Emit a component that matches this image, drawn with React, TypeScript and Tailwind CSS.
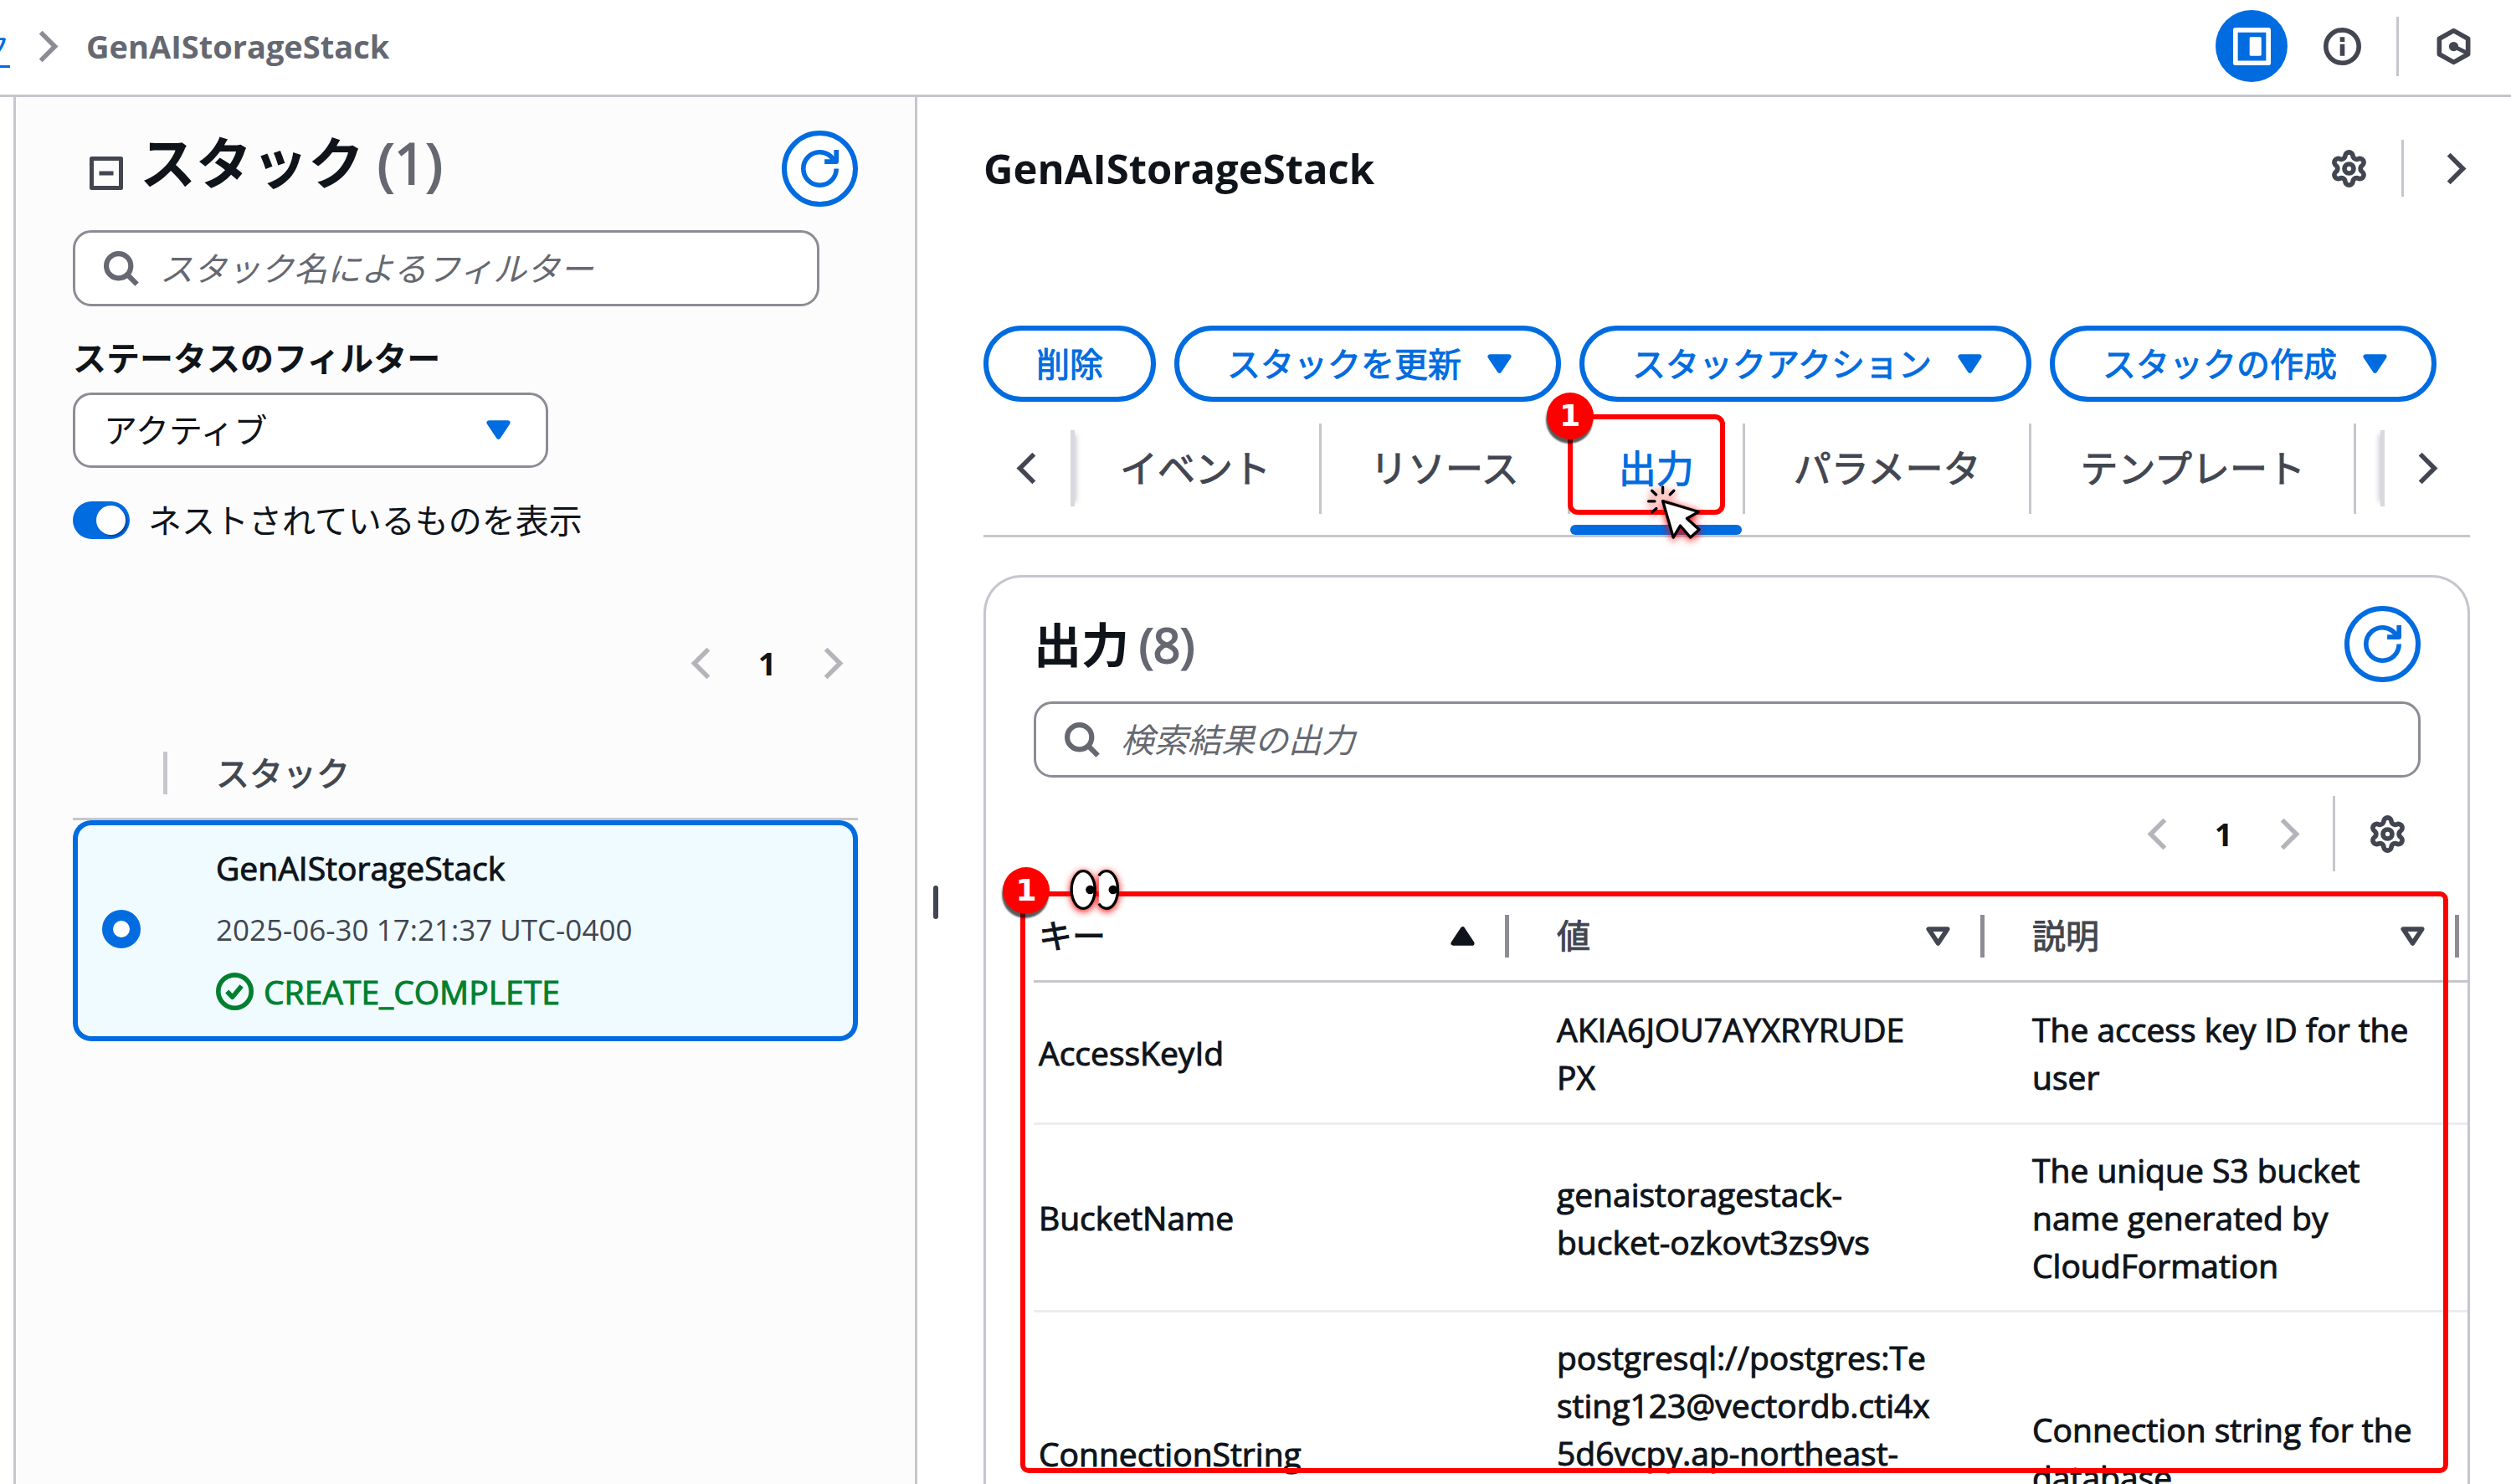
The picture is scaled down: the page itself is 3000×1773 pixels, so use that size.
import React from "react";

type IconProps = { className?: string };

const box = "h-[45px] w-[45px] shrink-0";

function Chevron({ dir, className = "" }: IconProps & { dir: "left" | "right" }) {
  return (
    <svg viewBox="0 0 16 16" className={`${box} ${className}`} fill="none" stroke="currentColor" strokeWidth="2" aria-hidden="true">
      <path d={dir === "right" ? "m4.5 2 6 6-6 6" : "m11.5 2-6 6 6 6"} />
    </svg>
  );
}

function Caret({ kind, className = "" }: IconProps & { kind: "down" | "down-open" | "up" }) {
  return (
    <svg viewBox="0 0 16 16" className={`${box} ${className}`} fill={kind === "down-open" ? "none" : "currentColor"} stroke="currentColor" strokeWidth="2" strokeLinejoin="round" aria-hidden="true">
      <path d={kind === "up" ? "M4 11h8L8 5l-4 6Z" : "M4 5h8l-4 6-4-6Z"} />
    </svg>
  );
}

function Refresh() {
  return (
    <svg viewBox="0 0 16 16" className={box} fill="none" stroke="currentColor" strokeWidth="2" aria-hidden="true">
      <path d="M10 5h5V0" strokeLinejoin="round" />
      <path d="M15 8a6.957 6.957 0 0 1-7 7 6.957 6.957 0 0 1-7-7 6.957 6.957 0 0 1 7-7 6.87 6.87 0 0 1 6.3 4" />
    </svg>
  );
}

function Search() {
  return (
    <svg viewBox="0 0 16 16" className={`${box} text-[#656871]`} fill="none" stroke="currentColor" strokeWidth="2.2" aria-hidden="true">
      <circle cx="7" cy="7" r="5.2" />
      <path d="m10.6 10.6 4.2 4.2" />
    </svg>
  );
}

function Gear() {
  return (
    <svg viewBox="0 0 24 24" className="h-[47px] w-[47px] shrink-0" fill="none" stroke="currentColor" strokeWidth="2.9" strokeLinejoin="round" aria-hidden="true">
      <path d="M9.671 4.136a2.34 2.34 0 0 1 4.659 0 2.34 2.34 0 0 0 3.319 1.915 2.34 2.34 0 0 1 2.33 4.033 2.34 2.34 0 0 0 0 3.831 2.34 2.34 0 0 1-2.33 4.033 2.34 2.34 0 0 0-3.319 1.915 2.34 2.34 0 0 1-4.659 0 2.34 2.34 0 0 0-3.32-1.915 2.34 2.34 0 0 1-2.33-4.033 2.34 2.34 0 0 0 0-3.831A2.34 2.34 0 0 1 6.35 6.051a2.34 2.34 0 0 0 3.319-1.915" />
      <circle cx="12" cy="12" r="2.8" />
    </svg>
  );
}

function PanelIcon() {
  return (
    <svg viewBox="0 0 16 16" className={box} fill="none" aria-hidden="true">
      <rect x="1" y="1" width="14" height="14" stroke="white" strokeWidth="2" strokeLinejoin="round" />
      <rect x="7" y="4" width="5" height="8" rx="0.5" fill="white" />
    </svg>
  );
}

function InfoIcon() {
  return (
    <svg viewBox="0 0 16 16" className={box} fill="none" stroke="currentColor" strokeWidth="2" aria-hidden="true">
      <circle cx="8" cy="8" r="7" />
      <path d="M8 4v2M8 7v5" />
    </svg>
  );
}

function HexIcon() {
  return (
    <svg viewBox="0 0 16 16" className={box} fill="none" stroke="currentColor" strokeWidth="2" strokeLinejoin="round" aria-hidden="true">
      <path d="m8 1.3 6.1 3.4v6.6L8 14.7l-6.1-3.4V4.7L8 1.3Z" />
      <circle cx="8" cy="8" r="2" fill="currentColor" stroke="none" />
      <path d="m8 8 6 2.9" strokeWidth="1.7" />
    </svg>
  );
}

function CollapseIcon() {
  return (
    <svg viewBox="0 0 40 40" className="h-[40px] w-[40px]" fill="none" stroke="#424650" aria-hidden="true">
      <rect x="2.5" y="2.5" width="35" height="35" strokeWidth="5" strokeLinejoin="round" />
      <path d="M11.5 20h17" strokeWidth="5" />
    </svg>
  );
}

function SuccessIcon() {
  return (
    <svg viewBox="0 0 16 16" className={box} fill="none" stroke="currentColor" strokeWidth="2" aria-hidden="true">
      <circle cx="8" cy="8" r="7" />
      <path d="m4.7 8 2.3 2.4 3.9-4.7" strokeLinejoin="round" />
    </svg>
  );
}

function ClickCursor() {
  return (
    <svg viewBox="380 355 220 220" className="h-[73px] w-[73px] overflow-visible drop-shadow-[0_2px_5px_rgba(255,0,0,1)]" stroke="black" strokeLinecap="round" aria-hidden="true">
      <path d="M442 367v21M403 380l15 14M482 380l-14 14M391 418h22M404 457l15-13" strokeWidth="10" fill="none" />
      <path d="m442 417 129 39-42 24 44 40-31 28-37-42-25 42Z" strokeWidth="10" fill="white" strokeLinejoin="round" />
    </svg>
  );
}

function Eyes() {
  return (
    <svg viewBox="266 51 185 156" className="h-[52px] w-[62px] overflow-visible drop-shadow-[0_2px_4px_rgba(255,0,0,1)]" aria-hidden="true">
      <path d="M370 80C380 64 398 57 412 67c20 13 27 38 27 62s-7 49-27 62c-14 10-32 3-42-13Z" fill="white" />
      <path d="M370 79c8-12 18-17 27-17 24 0 41 30 41 67s-17 67-41 67c-9 0-19-5-27-17" fill="none" stroke="black" strokeWidth="10" />
      <ellipse cx="314" cy="129" rx="42" ry="67" fill="white" stroke="black" strokeWidth="10" />
      <circle cx="339" cy="129" r="16" />
      <circle cx="421" cy="129" r="16" />
    </svg>
  );
}

function Badge({ className = "" }: IconProps) {
  return (
    <span className={`flex h-[56px] w-[56px] items-center justify-center rounded-full bg-[#ff0000] font-['DejaVu_Sans'] text-[36px] leading-none font-bold text-white shadow-[-1px_5px_2px_rgba(0,0,0,0.65)] ${className}`}>
      1
    </span>
  );
}

function RefreshButton() {
  return (
    <button type="button" aria-label="更新" className="flex h-[91px] w-[91px] shrink-0 items-center justify-center rounded-full border-[6px] border-[#006ce0] bg-white text-[#006ce0]">
      <Refresh />
    </button>
  );
}

function SearchBox({ id, placeholder, className = "" }: IconProps & { id: string; placeholder: string }) {
  return (
    <label htmlFor={id} className={`flex h-[91px] items-center gap-[24px] rounded-[22px] border-[3px] border-[#8c8c94] bg-white pl-[32px] ${className}`}>
      <Search />
      <input id={id} type="search" aria-label={placeholder} placeholder={placeholder} className="min-w-0 flex-1 bg-transparent text-[40px] outline-none placeholder:text-[#656871] placeholder:italic" />
    </label>
  );
}

function Pager() {
  return (
    <nav aria-label="ページ" className="flex h-[90px] items-center">
      <button type="button" aria-label="前へ" disabled className="flex w-[57px] justify-center text-[#b4b4bb]">
        <Chevron dir="left" />
      </button>
      <button type="button" className="w-[103px] text-center text-[38px] font-bold text-[#0f141a]">1</button>
      <button type="button" aria-label="次へ" disabled className="flex w-[57px] justify-center text-[#b4b4bb]">
        <Chevron dir="right" />
      </button>
    </nav>
  );
}

function Header() {
  return (
    <header className="flex h-[116px] items-center border-b-[3px] border-[#c6c6cd] pb-[3px]">
      <nav aria-label="階層" className="flex items-center text-[38px]">
        <div className="flex w-[12px] justify-end overflow-hidden">
          <a href="#stacks" className="whitespace-nowrap text-[#006ce0] underline decoration-[3px] underline-offset-[8px]">スタック</a>
        </div>
        <Chevron dir="right" className="mr-[22px] ml-[24px] text-[#8c8c94]" />
        <span className="font-bold text-[#656871]">GenAIStorageStack</span>
      </nav>
      <div className="ml-auto flex items-center gap-[22px] pr-[26px] text-[#424650]">
        <button type="button" aria-label="分割パネル" className="flex h-[86px] w-[86px] items-center justify-center rounded-full bg-[#006ce0]">
          <PanelIcon />
        </button>
        <button type="button" aria-label="情報" className="flex h-[86px] w-[86px] items-center justify-center">
          <InfoIcon />
        </button>
        <div className="h-[71px] w-[3px] bg-[#c6c6cd]" />
        <button type="button" aria-label="Amazon Q" className="flex h-[86px] w-[86px] items-center justify-center">
          <HexIcon />
        </button>
      </div>
    </header>
  );
}

function Sidebar() {
  return (
    <aside className="w-[1080px] shrink-0 border-x-[3px] border-[#c6c6cd] bg-[#fcfcfd] px-[68px] pt-[40px]">
      <div className="flex h-[90px] items-center">
        <button type="button" aria-label="折りたたむ" className="mt-[12px] mr-[20px] ml-[20px]">
          <CollapseIcon />
        </button>
        <h2 className="mb-[14px] text-[67px] leading-[80px] font-bold">
          スタック<span className="ml-[16px] font-normal text-[#656871] [-webkit-text-stroke:2px]">(1)</span>
        </h2>
        <div className="ml-auto">
          <RefreshButton />
        </div>
      </div>
      <SearchBox id="stack-filter" placeholder="スタック名によるフィルター" className="mt-[29px] mr-[46px]" />
      <label htmlFor="status" className="mt-[33px] block leading-[57px] font-bold">ステータスのフィルター</label>
      <div className="relative mt-[13px] w-[568px]">
        <select id="status" className="h-[90px] w-full appearance-none rounded-[22px] border-[3px] border-[#8c8c94] bg-white pl-[34px] text-[40px]">
          <option>アクティブ</option>
        </select>
        <Caret kind="down" className="pointer-events-none absolute top-[22px] right-[37px] text-[#006ce0]" />
      </div>
      <label className="mt-[34px] flex items-center gap-[22px] leading-[57px]">
        <input
          type="checkbox"
          defaultChecked
          className="flex h-[45px] w-[68px] appearance-none items-center justify-end rounded-full bg-[#006ce0] pr-[5px] before:h-[35px] before:w-[35px] before:rounded-full before:bg-white before:shadow-[2px_2px_2px_rgba(0,0,60,0.35)] before:content-['']"
        />
        ネストされているものを表示
      </label>
      <div className="mt-[97px] flex justify-end">
        <Pager />
      </div>
      <table className="mt-[33px] w-full border-separate border-spacing-0 text-left">
        <thead>
          <tr className="h-[110px]">
            <th className="w-[113px] border-b-[3px] border-[#c6c6cd] p-0" aria-label="選択">
              <div className="ml-auto h-[51px] w-[5px] bg-[#c6c6cd]" />
            </th>
            <th className="border-b-[3px] border-[#c6c6cd] p-0 pl-[58px] font-normal text-[#424650] [-webkit-text-stroke:1px]">スタック</th>
          </tr>
        </thead>
        <tbody>
          <tr className="h-[264px]">
            <td className="rounded-l-[22px] border-[6px] border-r-0 border-[#006ce0] bg-[#f0fbff] p-0 pb-[4px] pl-[29px]">
              <input type="radio" name="stack" defaultChecked aria-label="GenAIStorageStack" className="block h-[46px] w-[46px] appearance-none rounded-full border-[13px] border-[#006ce0] bg-white" />
            </td>
            <td className="rounded-r-[22px] border-[6px] border-l-0 border-[#006ce0] bg-[#f0fbff] p-0 pb-[4px] pl-[58px]">
              <div className="flex flex-col gap-[17px] text-[39px] leading-[57px]">
                <div className="[-webkit-text-stroke:1px]">GenAIStorageStack</div>
                <div className="text-[35px] text-[#424650]">2025-06-30 17:21:37 UTC-0400</div>
                <div className="flex items-center gap-[12px] text-[#00802f] [-webkit-text-stroke:1px]">
                  <SuccessIcon />
                  CREATE_COMPLETE
                </div>
              </div>
            </td>
          </tr>
        </tbody>
      </table>
    </aside>
  );
}

function ActionButton({ label, menu = false }: { label: string; menu?: boolean }) {
  return (
    <button type="button" className={`flex h-[91px] items-center gap-[23px] rounded-full border-[6px] border-[#006ce0] bg-white pl-[57px] text-[#006ce0] [-webkit-text-stroke:1px] ${menu ? "pr-[45px]" : "pr-[57px]"}`}>
      {label}
      {menu && <Caret kind="down" />}
    </button>
  );
}

function Tab({ label, active = false }: { label: string; active?: boolean }) {
  return (
    <div className="relative flex h-full items-center">
      <button
        type="button"
        role="tab"
        aria-selected={active}
        className={`h-full px-[58px] text-[45px] [-webkit-text-stroke:1px] ${active ? "text-[#006ce0]" : "text-[#424650]"}`}
      >
        {label}
      </button>
      <div className="h-[108px] w-[3px] bg-[#c6c6cd]" />
      {active && (
        <>
          <div className="absolute right-[4px] bottom-0 left-0 h-[12px] rounded-full bg-[#006ce0]" />
          <div className="pointer-events-none absolute top-[15px] -left-[3px] h-[120px] w-[188px] rounded-[12px] border-[6px] border-[#ff0000]" />
          <Badge className="absolute -top-[11px] -left-[28px]" />
          <div className="pointer-events-none absolute top-[98px] left-[90px] z-10">
            <ClickCursor />
          </div>
        </>
      )}
    </div>
  );
}

function Tabs() {
  return (
    <div className="mr-[49px] flex h-[162px] items-center border-b-[3px] border-[#c6c6cd]" role="tablist">
      <button type="button" aria-label="左へ" className="flex h-[91px] w-[109px] shrink-0 items-center border-r-[5px] border-[#d8d8de] pl-[28px] text-[#424650] shadow-[7px_0_6px_-5px_rgba(0,0,0,0.2)]">
        <Chevron dir="left" />
      </button>
      <div className="-ml-[4px] flex h-full min-w-0 flex-1">
        <Tab label="イベント" />
        <Tab label="リソース" />
        <Tab label="出力" active />
        <Tab label="パラメータ" />
        <Tab label="テンプレート" />
      </div>
      <button type="button" aria-label="右へ" className="flex h-[91px] w-[107px] shrink-0 items-center border-l-[5px] border-[#d8d8de] pl-[30px] text-[#424650] shadow-[-7px_0_6px_-5px_rgba(0,0,0,0.2)]">
        <Chevron dir="right" />
      </button>
    </div>
  );
}

const outputs = [
  { key: "AccessKeyId", value: ["AKIA6JOU7AYXRYRUDE", "PX"], description: ["The access key ID for the", "user"], height: "h-[170px]", align: "align-middle" },
  { key: "BucketName", value: ["genaistoragestack-", "bucket-ozkovt3zs9vs"], description: ["The unique S3 bucket", "name generated by", "CloudFormation"], height: "h-[224px]", align: "align-middle" },
  { key: "ConnectionString", value: ["postgresql://postgres:Te", "sting123@vectordb.cti4x", "5d6vcpy.ap-northeast-"], description: ["Connection string for the", "database"], height: "h-[339px]", align: "align-top" },
];

function Lines({ lines }: { lines: string[] }) {
  return (
    <>
      {lines.map((line) => (
        <div key={line} className="whitespace-nowrap">{line}</div>
      ))}
    </>
  );
}

function HeadCell({ label, sort, first = false, last = false }: { label: string; sort: "up" | "down-open"; first?: boolean; last?: boolean }) {
  return (
    <th className={`border-b-[3px] border-[#c6c6cd] p-0 font-normal [-webkit-text-stroke:1px] ${last ? "pr-[10px]" : "w-[568px]"}`}>
      <div className={`flex items-center ${first ? "pl-[6px] text-[#0f141a]" : "pl-[57px] text-[#424650]"}`}>
        {label}
        <Caret kind={sort} className="mr-[28px] ml-auto" />
        <span className="h-[51px] w-[5px] bg-[#8c8c94]" />
      </div>
    </th>
  );
}

function OutputsCard() {
  return (
    <section className="mt-[45px] mr-[49px] rounded-t-[45px] border-[3px] border-b-0 border-[#c6c6cd] pt-[34px] pl-[57px]">
      <div className="mr-[56px] flex items-center justify-between">
        <h2 className="text-[57px] leading-[72px] font-bold">
          出力<span className="ml-[12px] font-normal text-[#656871] [-webkit-text-stroke:2px]">(8)</span>
        </h2>
        <RefreshButton />
      </div>
      <SearchBox id="output-filter" placeholder="検索結果の出力" className="mt-[23px] mr-[56px]" />
      <div className="mt-[22px] mr-[57px] flex items-center justify-end text-[#424650]">
        <Pager />
        <div className="ml-[22px] h-[90px] w-[3px] bg-[#c6c6cd]" />
        <button type="button" aria-label="設定" className="mr-[10px] ml-[34px] flex w-[57px] justify-center">
          <Gear />
        </button>
      </div>
      <div className="relative mt-[24px]">
        <table className="w-full table-fixed border-separate border-spacing-0 text-left">
          <thead>
            <tr className="h-[109px]">
              <HeadCell label="キー" sort="up" first />
              <HeadCell label="値" sort="down-open" />
              <HeadCell label="説明" sort="down-open" last />
            </tr>
          </thead>
          <tbody className="text-[39px] leading-[57px] [-webkit-text-stroke:1px]">
            {outputs.map((row) => (
              <tr key={row.key} className={row.height}>
                <td className="border-b-[3px] border-[#ebebf0] py-[25px] pl-[6px]">{row.key}</td>
                <td className={`border-b-[3px] border-[#ebebf0] py-[25px] pl-[57px] ${row.align}`}>
                  <Lines lines={row.value} />
                </td>
                <td className="border-b-[3px] border-[#ebebf0] py-[25px] pl-[57px]">
                  <Lines lines={row.description} />
                </td>
              </tr>
            ))}
          </tbody>
        </table>
        <div className="pointer-events-none absolute top-0 right-[23px] -left-[16px] h-[695px] rounded-[10px] border-[6px] border-[#ff0000]" />
        <Badge className="absolute -top-[29px] -left-[37px]" />
        <div className="pointer-events-none absolute -top-[28px] left-[43px]">
          <Eyes />
        </div>
      </div>
    </section>
  );
}

function Main() {
  return (
    <main className="min-w-0 flex-1 pt-[40px]">
      <div className="mr-[22px] flex h-[90px] items-center text-[#424650]">
        <h1 className="mr-auto text-[49px] leading-[60px] font-bold text-[#0f141a]">GenAIStorageStack</h1>
        <button type="button" aria-label="設定" className="flex w-[86px] justify-center">
          <Gear />
        </button>
        <div className="mx-[20px] h-[68px] w-[3px] bg-[#c6c6cd]" />
        <button type="button" aria-label="展開" className="flex w-[86px] justify-center">
          <Chevron dir="right" />
        </button>
      </div>
      <div className="mt-[143px] flex gap-[22px]">
        <ActionButton label="削除" />
        <ActionButton label="スタックを更新" menu />
        <ActionButton label="スタックアクション" menu />
        <ActionButton label="スタックの作成" menu />
      </div>
      <Tabs />
      <OutputsCard />
    </main>
  );
}

export default function App() {
  return (
    <div lang="ja" className="flex h-screen flex-col overflow-hidden bg-white font-['Open_Sans','Noto_Sans_CJK_JP',sans-serif] text-[40px] text-[#0f141a]">
      <Header />
      <div className="flex min-h-0 flex-1 pl-[16px]">
        <Sidebar />
        <div className="w-[79px] shrink-0 pt-[942px] pl-[19px]">
          <div className="h-[40px] w-[6px] rounded-full bg-[#424650]" />
        </div>
        <Main />
      </div>
    </div>
  );
}
